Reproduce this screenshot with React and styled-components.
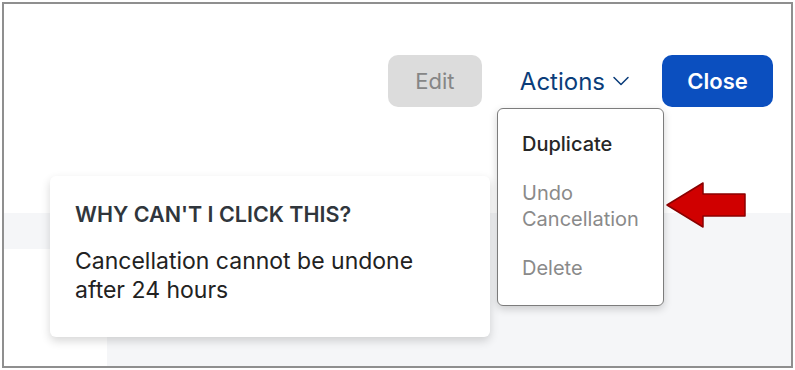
import React from 'react';
import styled, { createGlobalStyle } from 'styled-components';
import { ChevronDown } from 'lucide-react';

const GlobalStyle = createGlobalStyle`
  html, body {
    margin: 0;
    padding: 0;
    background: #ffffff;
  }
  body {
    font-family: Inter, "Noto Sans", Roboto, sans-serif;
  }
`

const Frame = styled.div`
  position: relative;
  box-sizing: border-box;
  margin: 2px 0 0 2px;
  width: 791px;
  height: 366px;
  border: 2px solid #8f8f8f;
  background: #ffffff;
  display: flex;
  flex-direction: column;
  overflow: hidden;
`

const Header = styled.div`
  height: 209px;
  flex-shrink: 0;
  background: #ffffff;
  display: flex;
  justify-content: flex-end;
  align-items: flex-start;
  padding: 51px 18px 0 0;
  box-sizing: border-box;
`

const Toolbar = styled.div`
  display: flex;
  align-items: center;
`

const Button = styled.button`
  box-sizing: border-box;
  height: 52px;
  width: ${props => props.width}px;
  border: none;
  border-radius: 10px;
  font-family: inherit;
  font-size: 22px;
  font-weight: ${props => (props.primary ? 600 : 400)};
  color: ${props => (props.primary ? '#ffffff' : '#868686')};
  background: ${props => (props.primary ? '#0b4fbf' : '#dcdcdc')};
  cursor: pointer;
`

const ActionsButton = styled.button`
  display: flex;
  align-items: center;
  gap: 2px;
  height: 52px;
  padding: 0 27px 0 38px;
  border: none;
  background: transparent;
  font-family: inherit;
  font-size: 24px;
  color: #0b3d7a;
  cursor: pointer;
`

const Body = styled.div`
  flex: 1;
  background: #f5f6f8;
  display: flex;
  align-items: stretch;
  padding-top: 36px;
`

const SideCard = styled.div`
  width: 103px;
  background: #ffffff;
`

const Menu = styled.ul`
  position: absolute;
  left: 493px;
  top: 104px;
  box-sizing: border-box;
  width: 167px;
  height: 198px;
  margin: 0;
  padding: 22px 0 24px 24px;
  list-style: none;
  background: #ffffff;
  border: 1px solid #7c7c7c;
  border-radius: 6px;
  box-shadow: 0 3px 8px rgba(0, 0, 0, 0.18);
  display: flex;
  flex-direction: column;
  gap: 23px;
`

const MenuItem = styled.li`
  font-size: 20px;
  line-height: 26px;
  font-weight: ${props => (props.active ? 500 : 400)};
  color: ${props => (props.active ? '#262626' : '#8a8a8a')};
`

const Tooltip = styled.div`
  position: absolute;
  left: 46px;
  top: 172px;
  box-sizing: border-box;
  width: 440px;
  height: 161px;
  padding: 26px 20px 0 25px;
  background: #ffffff;
  border-radius: 6px;
  box-shadow: 0 4px 10px rgba(0, 0, 0, 0.16);
`

const TooltipTitle = styled.div`
  font-size: 21.5px;
  line-height: 24px;
  font-weight: 600;
  color: #30363c;
  margin-bottom: 21px;
`

const TooltipText = styled.div`
  font-size: 23px;
  line-height: 29px;
  color: #222222;
`

const Arrow = styled.svg`
  position: absolute;
  left: 661px;
  top: 175px;
`

export default function App() {
  return (
    <>
      <GlobalStyle />
      <Frame>
        <Header>
          <Toolbar>
            <Button width={94}>Edit</Button>
            <ActionsButton>
              Actions
              <ChevronDown size={28} strokeWidth={1.3} />
            </ActionsButton>
            <Button primary width={111}>Close</Button>
          </Toolbar>
        </Header>
        <Body>
          <SideCard />
        </Body>

        <Menu>
          <MenuItem active>Duplicate</MenuItem>
          <MenuItem>Undo<br />Cancellation</MenuItem>
          <MenuItem>Delete</MenuItem>
        </Menu>

        <Tooltip>
          <TooltipTitle>WHY CAN'T I CLICK THIS?</TooltipTitle>
          <TooltipText>
            Cancellation cannot be undone<br />after 24 hours
          </TooltipText>
        </Tooltip>

        <Arrow width="84" height="50" viewBox="0 0 84 50">
          <path
            d="M2 26 L38 4 L38 15 L80 15 L80 37 L38 37 L38 48 Z"
            fill="#d00000"
            stroke="#8a0000"
            strokeWidth="1.5"
            strokeLinejoin="round"
          />
        </Arrow>
      </Frame>
    </>
  );
}
